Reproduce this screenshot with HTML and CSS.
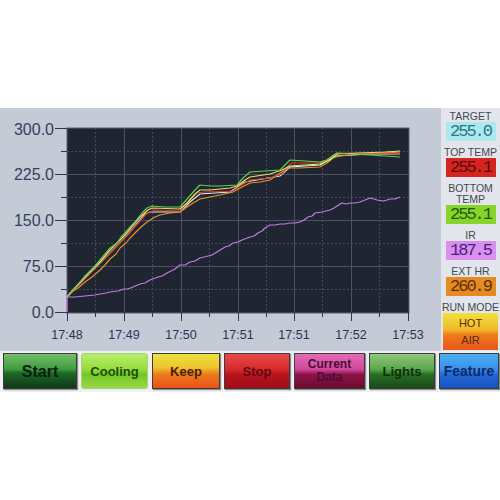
FILE: index.html
```html
<!doctype html>
<html>
	<head>
		<link rel="stylesheet" href="styles.css">
	</head>
	<body>
		<div id="screen">
			<div id="main">
				<svg class="chart" width="441" height="243" viewBox="0 0 441 243">
					<rect class="plot" x="67" y="20" width="342" height="185"/>
					<!-- grid -->
					<g class="grid-minor">
						<line x1="95.5" y1="20" x2="95.5" y2="204"/>
						<line x1="152.5" y1="20" x2="152.5" y2="204"/>
						<line x1="209.5" y1="20" x2="209.5" y2="204"/>
						<line x1="266.5" y1="20" x2="266.5" y2="204"/>
						<line x1="322.5" y1="20" x2="322.5" y2="204"/>
						<line x1="379.5" y1="20" x2="379.5" y2="204"/>
						<line x1="67" y1="43.5" x2="409" y2="43.5"/>
						<line x1="67" y1="89.5" x2="409" y2="89.5"/>
						<line x1="67" y1="135.5" x2="409" y2="135.5"/>
						<line x1="67" y1="181.5" x2="409" y2="181.5"/>
					</g>
					<g class="grid-major">
						<line x1="124.5" y1="20" x2="124.5" y2="204"/>
						<line x1="181.5" y1="20" x2="181.5" y2="204"/>
						<line x1="238.5" y1="20" x2="238.5" y2="204"/>
						<line x1="294.5" y1="20" x2="294.5" y2="204"/>
						<line x1="351.5" y1="20" x2="351.5" y2="204"/>
						<line x1="67" y1="66.5" x2="409" y2="66.5"/>
						<line x1="67" y1="112.5" x2="409" y2="112.5"/>
						<line x1="67" y1="158.5" x2="409" y2="158.5"/>
					</g>
					<!-- ticks -->
					<g class="tick">
						<line x1="55" y1="20.5" x2="67" y2="20.5"/>
						<line x1="55" y1="66.5" x2="67" y2="66.5"/>
						<line x1="55" y1="112.5" x2="67" y2="112.5"/>
						<line x1="55" y1="158.5" x2="67" y2="158.5"/>
						<line x1="55" y1="204.5" x2="67" y2="204.5"/>
						<line x1="61" y1="43.5" x2="67" y2="43.5"/>
						<line x1="61" y1="89.5" x2="67" y2="89.5"/>
						<line x1="61" y1="135.5" x2="67" y2="135.5"/>
						<line x1="61" y1="181.5" x2="67" y2="181.5"/>
						<line x1="67.5" y1="204" x2="67.5" y2="213"/>
						<line x1="124.5" y1="204" x2="124.5" y2="213"/>
						<line x1="181.5" y1="204" x2="181.5" y2="213"/>
						<line x1="238.5" y1="204" x2="238.5" y2="213"/>
						<line x1="294.5" y1="204" x2="294.5" y2="213"/>
						<line x1="351.5" y1="204" x2="351.5" y2="213"/>
						<line x1="408.5" y1="204" x2="408.5" y2="213"/>
						<line x1="95.5" y1="204" x2="95.5" y2="209"/>
						<line x1="152.5" y1="204" x2="152.5" y2="209"/>
						<line x1="209.5" y1="204" x2="209.5" y2="209"/>
						<line x1="266.5" y1="204" x2="266.5" y2="209"/>
						<line x1="322.5" y1="204" x2="322.5" y2="209"/>
						<line x1="379.5" y1="204" x2="379.5" y2="209"/>
					</g>
					<g class="ylab">
						<text x="54" y="27">300.0</text>
						<text x="54" y="72">225.0</text>
						<text x="54" y="118">150.0</text>
						<text x="54" y="164">75.0</text>
						<text x="54" y="210">0.0</text>
					</g>
					<g class="xlab">
						<text x="67" y="231">17:48</text>
						<text x="124" y="231">17:49</text>
						<text x="181" y="231">17:50</text>
						<text x="238" y="231">17:51</text>
						<text x="294" y="231">17:51</text>
						<text x="351" y="231">17:52</text>
						<text x="408" y="231">17:53</text>
					</g>
					<!-- curves -->
					<polyline class="c-target" points="67,189 90,165 110,145 130,124 145,106 150,104 180,104 190,94 200,86 230,84 245,74 280,68 290,59 320,57 335,48 370,46 400,46"/>
					<polyline class="c-ext" points="67,189 70,185 78,180 85,174 92,169 100,162 105,157 110,151 116,146 120,140 126,135 130,130 136,124 140,120 147,114 155,109 160,107 170,105 180,104 187,99 193,95 200,91 210,89 220,87 233,84 240,80 250,75 260,74 270,72 277,67 285,62 290,60 300,60 320,59 327,55 333,50 340,48 350,47 370,46 385,45 400,44"/>
					<polyline class="c-top" points="67,189 85,170 100,155 115,140 130,124 140,113 147,105 155,102 180,103 190,92 197,85 205,84 233,83 240,78 250,72 270,70 282,66 288,58 292,55 320,55 330,50 337,45 360,45 385,45 400,46"/>
					<polyline class="c-yel" points="67,189 72,183 85,169 100,154 110,142 125,127 140,109 148,102 152,100 180,101 187,95 195,86 200,82 210,82 230,80 237,78 245,72 250,69 270,66 282,62 290,58 320,56 330,52 337,46 360,45 385,44 400,43"/>
					<polyline class="c-bot" points="67,189 70,185 76,179 80,174 85,168 90,163 95,158 100,152 105,146 110,140 117,135 121,129 125,125 130,119 135,114 142,105 147,100 152,98 165,99 180,99 188,90 195,82 200,77 210,78 220,78 237,77 243,70 250,64 265,63 280,62 285,57 290,52 305,53 320,54 327,52 332,48 337,45 350,46 370,47 385,48 400,49"/>
					<polyline class="c-ir" points="67,204 67,189 75,189 85,188 95,187 100,186 106,185 110,184 118,183 124,181 128,181 133,179 140,176 145,175 150,172 158,169 162,168 167,165 175,161 180,157 185,157 190,154 195,153 200,150 208,148 212,147 217,144 225,139 229,138 233,135 238,134 242,132 250,129 254,128 258,125 262,123 265,120 270,117 275,117 280,116 285,116 290,115 295,115 300,114 304,112 308,109 312,108 315,105 322,104 326,103 330,102 334,100 337,98 342,95 346,96 350,95 355,95 360,94 365,92 370,90 374,91 377,92 383,93 387,92 390,91 395,91 400,89"/>
				</svg>
				<div class="side">
					<div class="lbl first">TARGET</div>
					<div class="val v-target">255.0</div>
					<div class="lbl">TOP TEMP</div>
					<div class="val v-top">255.1</div>
					<div class="lbl">BOTTOM<br>TEMP</div>
					<div class="val v-bot">255.1</div>
					<div class="lbl">IR</div>
					<div class="val v-ir">187.5</div>
					<div class="lbl">EXT HR</div>
					<div class="val v-ext">260.9</div>
					<div class="lbl">RUN MODE</div>
					<div class="mode">HOT<br>AIR</div>
				</div>
			</div>
			<div class="btns">
				<div class="btn b-start">Start</div>
				<div class="btn b-cool">Cooling</div>
				<div class="btn b-keep">Keep</div>
				<div class="btn b-stop">Stop</div>
				<div class="btn b-data">Current<br>Data</div>
				<div class="btn b-light">Lights</div>
				<div class="btn b-feat">Feature</div>
			</div>
		</div>
	</body>
</html>
```

FILE: styles.css
```css
* {
	margin: 0px;
	padding: 0px;
}
body {
	background: white;
	font-family: "Liberation Sans", Arial, sans-serif;
}
#screen {
	width: 500px;
	margin-top: 108px;
	background: #d3d8e0;
}
#main {
	display: flex;
	height: 243px;
}
.chart {
	display: block;
	background: #c4cbd7;
}
.plot {
	fill: #1f2531;
	stroke: #5a6372;
	stroke-width: 1;
}
.grid-minor line {
	stroke: #434c5a;
	stroke-width: 1;
	stroke-dasharray: 2 2;
}
.grid-major line {
	stroke: #4a5362;
	stroke-width: 1;
}
.tick line {
	stroke: #2f3850;
	stroke-width: 1;
}
.ylab text {
	font-size: 16px;
	fill: #34405c;
	text-anchor: end;
}
.xlab text {
	font-size: 12.5px;
	fill: #2c3450;
	text-anchor: middle;
}
polyline {
	fill: none;
	stroke-width: 1.2;
	stroke-linejoin: round;
}
.c-target { stroke: #d6f2f4; }
.c-ext { stroke: #e8922a; }
.c-top { stroke: #e03a2a; }
.c-yel { stroke: #e8e070; }
.c-bot { stroke: #5ed04a; }
.c-ir { stroke: #c77ae0; }

.side {
	width: 59px;
	background: #e2e6ec;
	display: flex;
	flex-direction: column;
	align-items: center;
	padding-top: 3px;
}
.lbl {
	font-size: 10.5px;
	line-height: 11px;
	color: #45484f;
	text-align: center;
	white-space: nowrap;
	padding-top: 6px;
}
.lbl.first {
	padding-top: 0;
}
.val {
	width: 50px;
	height: 19px;
	font-family: "Liberation Mono", monospace;
	font-size: 17px;
	letter-spacing: -2px;
	line-height: 19px;
	text-align: center;
}
.v-target { background: #aee8ef; color: #2a7486; }
.v-top { background: #d6241f; color: #5c0909; }
.v-bot { background: #86d42c; color: #235a10; }
.v-ir { background: #d990ea; color: #4d1a86; }
.v-ext { background: #e68a22; color: #5e3008; }
.mode {
	width: 55px;
	height: 37px;
	box-sizing: border-box;
	padding-top: 2px;
	font-size: 11px;
	line-height: 17px;
	color: #5a2a10;
	text-align: center;
	background: linear-gradient(#f0e23a 0%, #f2b82a 45%, #ee7a1a 60%, #e8561a 100%);
}

.btns {
	display: grid;
	grid-template-columns: 74px 67px 68px 66px 71px 66px 60px;
	column-gap: 4px;
	padding: 2px 0 3px 3px;
	background: #eef0f3;
}
.btn {
	height: 36px;
	box-sizing: border-box;
	border: 1px solid #3c3c3c;
	box-shadow: 1px 1px 1px #8a8a8a;
	display: flex;
	align-items: center;
	justify-content: center;
	text-align: center;
	font-weight: bold;
	font-size: 13px;
	line-height: 13px;
}
.b-start {
	font-size: 16px;
	color: #0c1e0c;
	background: linear-gradient(#74c06a 0%, #3f9a3e 45%, #1d6a2a 55%, #0e3a16 100%);
}
.b-cool {
	color: #1f4a0c;
	border-color: #a6d07a;
	border-radius: 3px;
	box-shadow: none;
	background: linear-gradient(#b8ee6a 0%, #96dc3c 45%, #72c822 60%, #9ad84a 100%);
}
.b-keep {
	color: #4a1e08;
	background: linear-gradient(#ece23e 0%, #eec42e 40%, #ec7a1e 60%, #e8501a 100%);
}
.b-stop {
	color: #5a0a10;
	background: linear-gradient(#e84a4a 0%, #d82a2a 45%, #b81420 60%, #a00c18 100%);
}
.b-data {
	font-size: 12px;
	color: #4a0c38;
	background: linear-gradient(#e46cb8 0%, #d0489a 45%, #8e1446 60%, #6a0a30 100%);
}
.b-light {
	color: #0c300c;
	background: linear-gradient(#8ec87a 0%, #5ca64c 45%, #2a6e26 60%, #184a18 100%);
}
.b-feat {
	font-size: 14px;
	color: #0e2a6a;
	background: linear-gradient(#4aaef2 0%, #3a90ea 45%, #2468d6 60%, #1a50c0 100%);
}
```
